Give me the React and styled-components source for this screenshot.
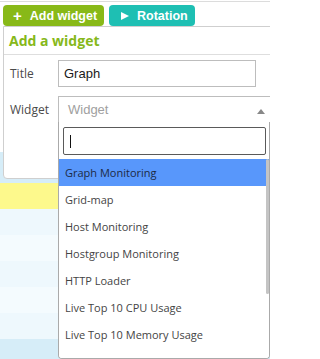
import React from 'react';
import styled, { createGlobalStyle } from 'styled-components';

const GlobalStyle = createGlobalStyle`
  body {
    margin: 0;
    background: #fff;
    font-family: "Open Sans", sans-serif;
    overflow: hidden;
  }
`;

const Page = styled.div`
  position: relative;
  width: 270px;
  height: 359px;
  overflow: hidden;
  border-top: 1px solid #dcdcdc;
  margin-top: 1px;
  box-sizing: border-box;
`;

const Toolbar = styled.div`
  display: flex;
  gap: 5px;
  padding: 3px 0 0 3px;
`;

const ToolButton = styled.div`
  display: flex;
  align-items: center;
  gap: 8px;
  height: 21px;
  padding: 0 0 0 10px;
  border-radius: 4px;
  background: ${({ color }) => color};
  color: #fff;
  font-family: "Liberation Sans", Arial, sans-serif;
  font-weight: bold;
  font-size: 12.5px;
  white-space: nowrap;
  width: ${({ w }) => w}px;
  box-sizing: border-box;
`;

const Plus = styled.span`
  font-size: 15px;
  line-height: 1;
  margin-top: -1px;
`;

const Play = styled.span`
  width: 0;
  height: 0;
  border-left: 8px solid #fff;
  border-top: 4.5px solid transparent;
  border-bottom: 4.5px solid transparent;
  margin: 0 0 0 2px;
`;

const Table = styled.div`
  display: flex;
  flex-direction: column;
  margin-top: 126px;
`;

const Row = styled.div`
  height: ${({ h }) => h}px;
  background: ${({ bg }) => bg};
`;

const Panel = styled.div`
  position: absolute;
  left: 3px;
  top: 24px;
  right: -10px;
  height: 153px;
  background: #fff;
  border: 1px solid #cfcfcf;
  border-radius: 0 0 4px 4px;
  box-sizing: border-box;
`;

const PanelTitle = styled.div`
  height: 27px;
  display: flex;
  align-items: center;
  padding-left: 5px;
  color: #86b81a;
  font-weight: 700;
  font-size: 14px;
  border-bottom: 1px solid #dedede;
`;

const Form = styled.div`
  display: flex;
  flex-direction: column;
  gap: 9px;
  padding: 5px 0 0 6px;
`;

const FieldRow = styled.div`
  display: flex;
  align-items: center;
`;

const Label = styled.div`
  width: 48px;
  font-size: 12px;
  color: #4a4a4a;
`;

const TextInput = styled.div`
  width: 198px;
  height: 27px;
  box-sizing: border-box;
  border: 1px solid #bdbdbd;
  display: flex;
  align-items: center;
  padding-left: 5px;
  font-family: "Liberation Sans", Arial, sans-serif;
  font-size: 13px;
  color: #1a1a1a;
`;

const SelectBox = styled(TextInput)`
  position: relative;
  flex: 1;
  border-right: none;
  padding-left: 9px;
  color: #a0a0a0;
`;

const Caret = styled.span`
  position: absolute;
  right: 14px;
  top: 12px;
  width: 0;
  height: 0;
  border-bottom: 5px solid #888;
  border-left: 4px solid transparent;
  border-right: 4px solid transparent;
`;

const Dropdown = styled.div`
  position: absolute;
  left: 58px;
  top: 120px;
  width: 212px;
  bottom: 1px;
  background: #fff;
  border: 1px solid #aaa;
  border-top: none;
  border-radius: 0 0 4px 4px;
  box-sizing: border-box;
  display: flex;
  flex-direction: column;
  overflow: hidden;
`;

const SearchWrap = styled.div`
  padding: 5px 3px 4px 4px;
`;

const Search = styled.div`
  height: 28px;
  border: 1px solid #5a5a5a;
  border-radius: 2px;
  box-sizing: border-box;
  display: flex;
  align-items: center;
  padding-left: 6px;
`;

const Cursor = styled.span`
  width: 1px;
  height: 13px;
  background: #111;
`;

const List = styled.div`
  position: relative;
  display: flex;
  flex-direction: column;
`;

const Item = styled.div`
  height: 27px;
  flex-shrink: 0;
  display: flex;
  align-items: center;
  padding-left: 6px;
  font-size: 11px;
  color: ${({ active }) => (active ? '#1d2a44' : '#444')};
  background: ${({ active }) => (active ? '#5897fb' : '#fff')};
`;

const ScrollThumb = styled.div`
  position: absolute;
  right: 0;
  top: 0;
  width: 3px;
  height: 135px;
  background: #c4c4c4;
  border-radius: 2px;
`;

const rows = [
  { h: 31, bg: '#d6edf8' },
  { h: 26, bg: '#fdf98c' },
  { h: 26, bg: '#eef8fd' },
  { h: 26, bg: '#f4fbfe' },
  { h: 26, bg: '#eef8fd' },
  { h: 26, bg: '#f4fbfe' },
  { h: 26, bg: '#eef8fd' },
  { h: 26, bg: '#d6edf8' },
];

const items = [
  'Graph Monitoring',
  'Grid-map',
  'Host Monitoring',
  'Hostgroup Monitoring',
  'HTTP Loader',
  'Live Top 10 CPU Usage',
  'Live Top 10 Memory Usage',
  'Service Monitoring',
];

export default function App() {
  return (
    <Page>
      <GlobalStyle />
      <Toolbar>
        <ToolButton color="#88b918" w={101}>
          <Plus>+</Plus>
          Add widget
        </ToolButton>
        <ToolButton color="#1ebfb3" w={86}>
          <Play />
          Rotation
        </ToolButton>
      </Toolbar>
      <Table>
        {rows.map((r, i) => (
          <Row key={i} h={r.h} bg={r.bg} />
        ))}
      </Table>
      <Panel>
        <PanelTitle>Add a widget</PanelTitle>
        <Form>
          <FieldRow>
            <Label>Title</Label>
            <TextInput>Graph</TextInput>
          </FieldRow>
          <FieldRow>
            <Label>Widget</Label>
            <SelectBox>
              Widget
              <Caret />
            </SelectBox>
          </FieldRow>
        </Form>
      </Panel>
      <Dropdown>
        <SearchWrap>
          <Search>
            <Cursor />
          </Search>
        </SearchWrap>
        <List>
          {items.map((it, i) => (
            <Item key={it} active={i === 0}>{it}</Item>
          ))}
          <ScrollThumb />
        </List>
      </Dropdown>
    </Page>
  );
}
